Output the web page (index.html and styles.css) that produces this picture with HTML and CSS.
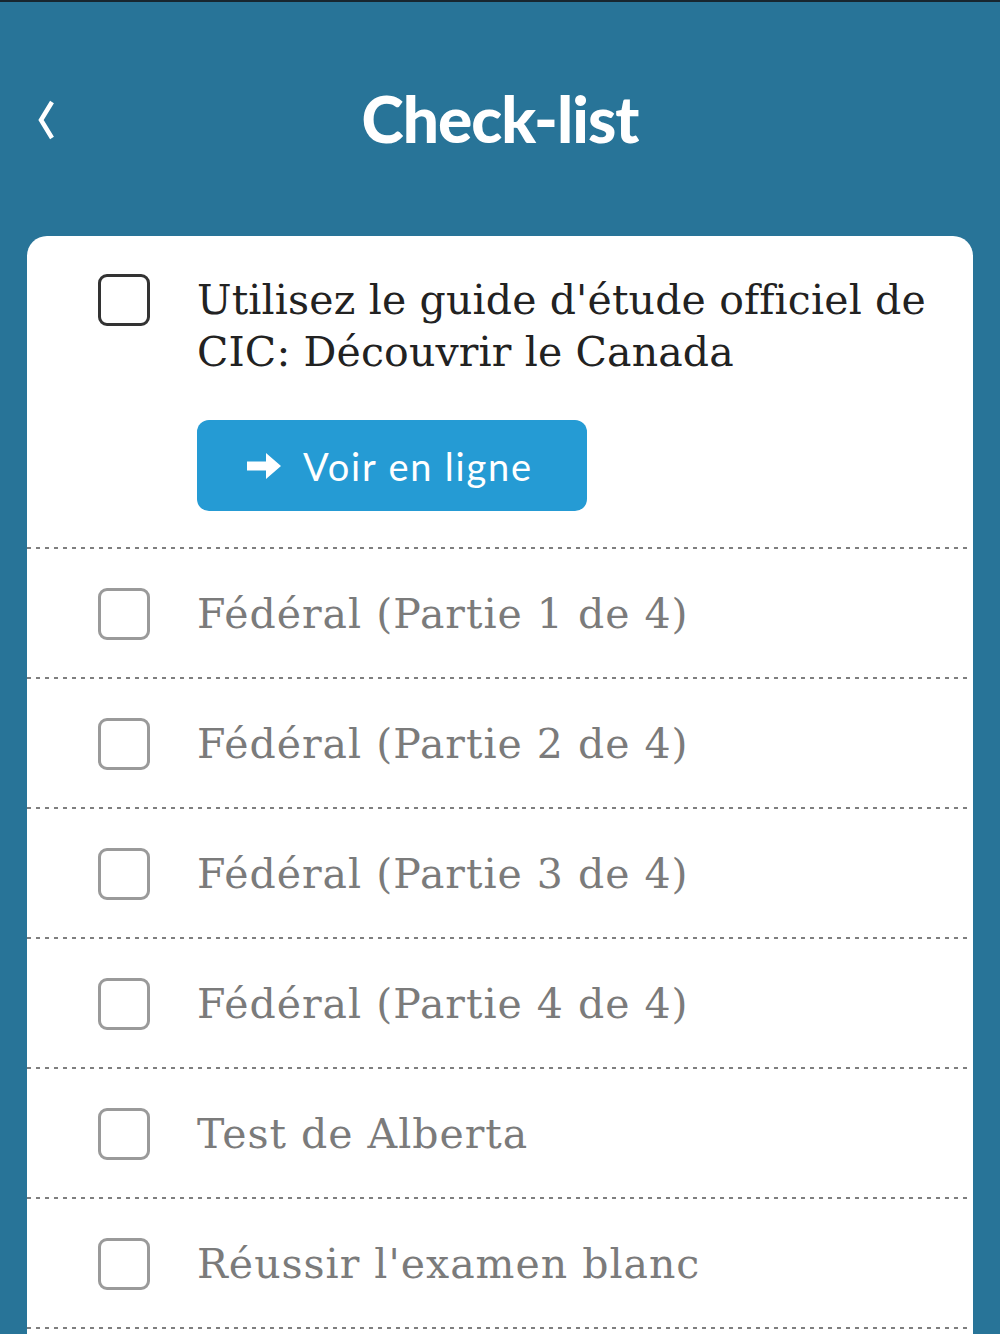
FILE: index.html
```html
<!DOCTYPE html>
<html lang="fr">
<head>
  <meta charset="UTF-8" />
  <meta name="viewport" content="width=device-width, initial-scale=1" />
  <title>Check-list</title>
  <link rel="stylesheet" href="styles.css">
</head>
<body>
  <header class="topbar">
    <a class="back" href="#" aria-label="Retour">
      <svg width="22" height="40" viewBox="0 0 22 40"><path d="M19 2 L8 20 L19 38" fill="none" stroke="#fff" stroke-width="4.5" stroke-linejoin="miter"/></svg>
    </a>
    <h1>Check-list</h1>
  </header>

  <main class="card">
    <ul class="checklist">
      <li class="item item-main">
        <span class="box"></span>
        <div class="item-body">
          <p class="label">Utilisez le guide d'étude officiel de CIC: Découvrir le Canada</p>
          <a class="btn" href="#">
            <svg width="34" height="26" viewBox="0 0 34 26"><path d="M0 8.5 H19 V0 L34 13 L19 26 V17.5 H0 Z" fill="#fff"/></svg>
            <span>Voir en ligne</span>
          </a>
        </div>
      </li>
      <li class="item"><span class="box"></span><p class="label">Fédéral (Partie 1 de 4)</p></li>
      <li class="item"><span class="box"></span><p class="label">Fédéral (Partie 2 de 4)</p></li>
      <li class="item"><span class="box"></span><p class="label">Fédéral (Partie 3 de 4)</p></li>
      <li class="item"><span class="box"></span><p class="label">Fédéral (Partie 4 de 4)</p></li>
      <li class="item"><span class="box"></span><p class="label">Test de Alberta</p></li>
      <li class="item"><span class="box"></span><p class="label">Réussir l'examen blanc</p></li>
    </ul>
  </main>
</body>
</html>
```

FILE: styles.css
```css
body {
  margin: 0;
  padding: 0 27px;
  background: #287498;
  border-top: 2px solid #18262f;
  font-family: "DejaVu Serif", serif;
  height: 1332px;
  overflow: hidden;
}

.topbar {
  height: 234px;
  display: flex;
  align-items: center;
  justify-content: center;
  position: relative;
}

.back {
  position: absolute;
  left: 6px;
  top: 98px;
  display: block;
}

.topbar h1 {
  margin: 0;
  margin-top: -2px;
  color: #fff;
  font-family: Lato, sans-serif;
  font-weight: 900;
  font-size: 64px;
  letter-spacing: -1px;
}

.card {
  background: #fff;
  border-radius: 20px 20px 0 0;
  padding-right: 5px;
  min-height: 1100px;
}

.checklist {
  list-style: none;
  margin: 0;
  padding: 0;
}

.item {
  display: flex;
  align-items: center;
  height: 130px;
  box-sizing: border-box;
  padding-left: 71px;
  background: repeating-linear-gradient(to right, #7f7f7f 0 4px, transparent 4px 9px) bottom left / 100% 2px no-repeat;
}

.item-main {
  align-items: flex-start;
  height: 313px;
  padding-top: 38px;
}

.box {
  flex: none;
  width: 52px;
  height: 52px;
  box-sizing: border-box;
  border: 3px solid #9a9a9a;
  border-radius: 9px;
  margin-right: 47px;
}

.item-main .box {
  border-color: #333;
}

.label {
  margin: 0;
  font-size: 41px;
  line-height: 52px;
  color: #7b7b7b;
  letter-spacing: 1px;
}

.item-main .label {
  color: #222;
  letter-spacing: 0.15px;
  padding-right: 8px;
}

.btn {
  display: flex;
  align-items: center;
  justify-content: center;
  gap: 22px;
  margin-top: 42px;
  width: 390px;
  height: 91px;
  background: #259bd4;
  border-radius: 12px;
  color: #fff;
  text-decoration: none;
  font-family: Lato, sans-serif;
  font-size: 38px;
  letter-spacing: 1.8px;
}

.btn svg {
  margin-left: -4px;
}
```
